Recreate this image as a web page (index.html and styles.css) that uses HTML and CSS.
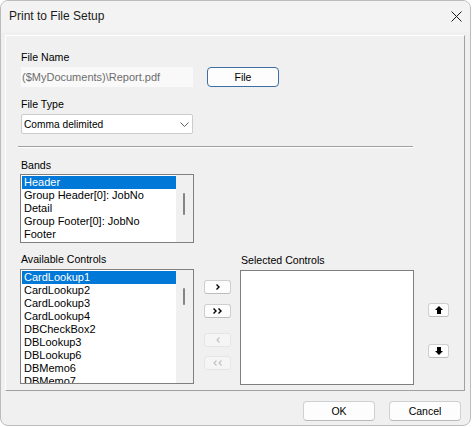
FILE: index.html
```html
<!DOCTYPE html>
<html>
<head>
<meta charset="utf-8">
<link rel="stylesheet" href="styles.css">
</head>
<body>
<div class="window">
  <div class="titlebar">
    <span class="title">Print to File Setup</span>
    <span class="close"><svg width="11" height="11" viewBox="0 0 11 11"><path d="M0.5 0.5 L10.5 10.5 M10.5 0.5 L0.5 10.5" stroke="#1a1a1a" stroke-width="1" fill="none"/></svg></span>
  </div>
  <div class="client">
    <div class="panel">
      <div class="label">File Name</div>
      <div class="file-row">
        <div class="edit">($MyDocuments)\Report.pdf</div>
        <button class="btn btn-default file-btn">File</button>
      </div>
      <div class="label gap10">File Type</div>
      <div class="combo">
        <span class="combo-text">Comma delimited</span>
        <svg class="chevron" width="9" height="5" viewBox="0 0 9 5"><polyline points="0.5,0.5 4.5,4.5 8.5,0.5" stroke="#5c5c5c" stroke-width="1" fill="none"/></svg>
      </div>
      <div class="separator"></div>
      <div class="label bands-label">Bands</div>
      <div class="listbox bands">
        <div class="items">
          <div class="item selected">Header</div>
          <div class="item">Group Header[0]: JobNo</div>
          <div class="item">Detail</div>
          <div class="item">Group Footer[0]: JobNo</div>
          <div class="item">Footer</div>
        </div>
        <div class="scrollbar"><div class="thumb thumb-bands"></div></div>
      </div>
      <div class="controls-row">
        <div class="col">
          <div class="label">Available Controls</div>
          <div class="listbox tall">
            <div class="items">
              <div class="item selected">CardLookup1</div>
              <div class="item">CardLookup2</div>
              <div class="item">CardLookup3</div>
              <div class="item">CardLookup4</div>
              <div class="item">DBCheckBox2</div>
              <div class="item">DBLookup3</div>
              <div class="item">DBLookup6</div>
              <div class="item">DBMemo6</div>
              <div class="item">DBMemo7</div>
            </div>
            <div class="scrollbar"><div class="thumb thumb-avail"></div></div>
          </div>
        </div>
        <div class="arrows">
          <button class="sbtn s1"><svg width="4" height="6" viewBox="0 0 4 6"><polyline points="0.5,0.5 3,3 0.5,5.5" stroke="#000" stroke-width="1.4" fill="none"/></svg></button>
          <button class="sbtn s2"><svg width="9" height="6" viewBox="0 0 9 6"><polyline points="0.5,0.5 3,3 0.5,5.5" stroke="#000" stroke-width="1.4" fill="none"/><polyline points="5.5,0.5 8,3 5.5,5.5" stroke="#000" stroke-width="1.4" fill="none"/></svg></button>
          <button class="sbtn s3 disabled"><svg width="4" height="6" viewBox="0 0 4 6"><polyline points="3.5,0.5 1,3 3.5,5.5" stroke="#c2c2c2" stroke-width="1.2" fill="none"/></svg></button>
          <button class="sbtn s4 disabled"><svg width="9" height="6" viewBox="0 0 9 6"><polyline points="3.5,0.5 1,3 3.5,5.5" stroke="#c2c2c2" stroke-width="1.2" fill="none"/><polyline points="8.5,0.5 6,3 8.5,5.5" stroke="#c2c2c2" stroke-width="1.2" fill="none"/></svg></button>
        </div>
        <div class="col sel-col">
          <div class="label">Selected Controls</div>
          <div class="listbox tall empty"></div>
        </div>
        <div class="updown">
          <button class="ubtn"><svg width="8" height="8" viewBox="0 0 8 8"><path d="M4 0 L8 4 H6 V8 H2 V4 H0 Z" fill="#000"/></svg></button>
          <button class="ubtn down"><svg width="8" height="8" viewBox="0 0 8 8"><path d="M4 8 L8 4 H6 V0 H2 V4 H0 Z" fill="#000"/></svg></button>
        </div>
      </div>
    </div>
    <div class="footer">
      <button class="btn">OK</button>
      <button class="btn">Cancel</button>
    </div>
  </div>
</div>
</body>
</html>
```

FILE: styles.css
```css
* { box-sizing: border-box; }
html, body { margin: 0; padding: 0; background: #ffffff; }
body { font-family: "Liberation Sans", Arial, sans-serif; color: #000; }

.window {
  width: 471px;
  height: 426px;
  border: 1px solid #bcbcbc;
  border-radius: 8px;
  background: #f0f0f0;
  overflow: hidden;
}

.titlebar {
  height: 31px;
  background: #f3f3f3;
  display: flex;
  align-items: center;
  justify-content: space-between;
  padding: 0 8px 1px 8px;
}
.title { font-size: 12px; color: #1a1a1a; }
.close { display: flex; align-items: center; }

.client { padding-top: 3px; }

.panel {
  margin-left: 4px;
  width: 460px;
  height: 356px;
  border-top: 1px solid #ffffff;
  border-left: 1px solid #ffffff;
  border-right: 1px solid #a0a0a0;
  border-bottom: 1px solid #a0a0a0;
  padding: 14px 0 0 14px;
}

.label {
  font-size: 10.6px;
  line-height: 14px;
  height: 14px;
  padding-left: 1px;
  color: #000;
}
.gap10 { margin-top: 10px; }

.file-row {
  display: flex;
  margin-top: 3px;
  height: 20px;
}
.edit {
  margin-left: 1px;
  width: 172px;
  height: 20px;
  background: #f9f9f9;
  color: #6d6d6d;
  font-size: 11px;
  line-height: 20px;
  padding-left: 1px;
}
.btn {
  font-family: "Liberation Sans", Arial, sans-serif;
  font-size: 10.5px;
  color: #000;
  width: 72px;
  height: 20px;
  padding: 0;
  background: #fdfdfd;
  border: 1px solid #d0d0d0;
  border-bottom-color: #bababa;
  border-radius: 4px;
}
.file-btn { margin-left: 14px; }
.btn-default { border: 1px solid #3c6ea3; }

.combo {
  margin-top: 3px;
  margin-left: 1px;
  width: 172px;
  height: 20px;
  background: #ffffff;
  border: 1px solid #cccccc;
  border-radius: 2px;
  display: flex;
  align-items: center;
  justify-content: space-between;
  padding: 0 3px 0 2px;
}
.combo-text { font-size: 10.2px; }
.chevron { display: block; }

.separator {
  margin-top: 12px;
  margin-left: -2px;
  width: 395px;
  height: 2px;
  border-top: 1px solid #a0a0a0;
  border-bottom: 1px solid #ffffff;
}
.bands-label { margin-top: 10px; }

.listbox {
  width: 174px;
  background: #ffffff;
  border: 1px solid #7f7f7f;
  display: flex;
  overflow: hidden;
}
.bands { height: 69px; margin-top: 2px; }
.tall { height: 115px; margin-top: 3px; }

.items {
  width: 155px;
  padding: 1px 0 0 1px;
  overflow: hidden;
}
.item {
  height: 13px;
  line-height: 13px;
  font-size: 11px;
  padding-left: 2px;
  white-space: nowrap;
}
.item.selected { background: #0078d7; color: #ffffff; }

.scrollbar {
  width: 17px;
  background: #f0f0f0;
  padding-left: 7px;
}
.thumb {
  width: 2px;
  background: #858585;
  border-radius: 1px;
}
.thumb-bands { margin-top: 18px; height: 22px; }
.thumb-avail { margin-top: 18px; height: 17px; }

.controls-row {
  display: flex;
  align-items: flex-start;
  margin-top: 9px;
}
.col { width: 174px; }
.sel-col { margin-left: 9px; padding-top: 1px; }

.arrows {
  margin-left: 10px;
  width: 27px;
  padding-top: 28px;
  display: flex;
  flex-direction: column;
}
.sbtn {
  width: 27px;
  height: 14px;
  padding: 0;
  background: #fdfdfd;
  border: 1px solid #cfcfcf;
  border-bottom-color: #bdbdbd;
  border-radius: 3px;
  display: flex;
  align-items: center;
  justify-content: center;
}
.sbtn svg { display: block; }
.s2 { margin-top: 10px; }
.s3 { margin-top: 15px; }
.s4 { margin-top: 9px; }
.sbtn.disabled { background: #f5f5f5; border-color: #e5e5e5; }

.updown {
  margin-left: 14px;
  width: 21px;
  padding-top: 51px;
  display: flex;
  flex-direction: column;
}
.ubtn {
  width: 21px;
  height: 14px;
  padding: 0;
  background: #fdfdfd;
  border: 1px solid #cfcfcf;
  border-bottom-color: #bdbdbd;
  border-radius: 3px;
  display: flex;
  align-items: center;
  justify-content: center;
}
.ubtn svg { display: block; }
.ubtn.down { margin-top: 27px; }

.footer {
  display: flex;
  justify-content: flex-end;
  gap: 14px;
  padding: 10px 9px 0 0;
}
```
